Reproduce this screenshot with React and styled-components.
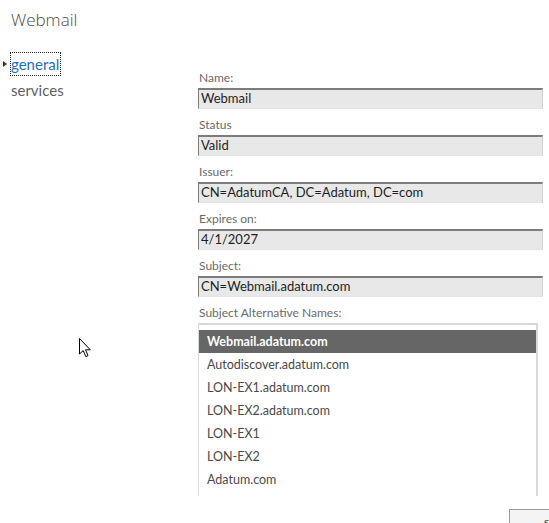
import React from 'react'
import styled, { createGlobalStyle } from 'styled-components'

const GlobalStyle = createGlobalStyle`
  html, body {
    margin: 0;
    padding: 0;
    background: #fff;
  }
  body {
    font-family: Lato, "Open Sans", "Liberation Sans", sans-serif;
  }
`

const Page = styled.div`
  position: relative;
  width: 549px;
  height: 523px;
  overflow: hidden;
  background: #fff;
  display: flex;
  flex-direction: column;
`

const Title = styled.h1`
  flex-shrink: 0;
  margin: 0;
  padding: 8px 0 0 11px;
  height: 53px;
  box-sizing: border-box;
  font-family: "Open Sans", sans-serif;
  font-size: 17px;
  font-weight: 300;
  color: #4a4a4a;
  line-height: 24px;
`

const Body = styled.div`
  display: flex;
  flex: 1;
  min-height: 0;
`

const Nav = styled.nav`
  width: 198px;
  display: flex;
  flex-direction: column;
  gap: 4px;
`

const NavItem = styled.div`
  position: relative;
  align-self: flex-start;
  margin-left: 11px;
  font-size: 15px;
  line-height: 22px;
  color: ${p => (p.$active ? '#1c6fc0' : '#5f5f5f')};
  outline: ${p => (p.$active ? '1px dotted #222' : 'none')};
  outline-offset: 0;
  padding-right: 1px;

  &::before {
    content: '';
    display: ${p => (p.$active ? 'block' : 'none')};
    position: absolute;
    left: -8px;
    top: 8px;
    border-left: 4px solid #333;
    border-top: 3.5px solid transparent;
    border-bottom: 3.5px solid transparent;
  }
`

const Form = styled.div`
  width: 345px;
  padding-top: 17px;
  display: flex;
  flex-direction: column;
  overflow: hidden;
`

const Field = styled.div`
  flex-shrink: 0;
  display: flex;
  flex-direction: column;
  margin-bottom: 8px;
`

const Label = styled.div`
  flex-shrink: 0;
  font-size: 12px;
  line-height: 16px;
  color: #6a6a6a;
  margin-bottom: 2px;
  padding-left: 1px;
`

const Input = styled.div`
  box-sizing: border-box;
  height: 21px;
  background: #e8e8e8;
  border-top: 2px solid #7c7c7c;
  border-left: 1px solid #7c7c7c;
  border-right: 1px solid #d2d2d2;
  border-bottom: 1px solid #e4e4e4;
  padding-left: 2px;
  font-size: 13px;
  line-height: 17px;
  color: #1e1e1e;
  white-space: nowrap;
`

const List = styled.div`
  flex-shrink: 0;
  box-sizing: border-box;
  width: 340px;
  height: 173px;
  overflow: hidden;
  border: 2px solid #d5dada;
  border-left-width: 1px;
  border-bottom: none;
  padding-top: 5px;
`

const ListItem = styled.div`
  height: 23px;
  line-height: 23px;
  padding-left: 8px;
  font-size: 12.5px;
  color: ${p => (p.$selected ? '#fff' : '#4a4a4a')};
  background: ${p => (p.$selected ? '#666666' : 'transparent')};
  font-weight: ${p => (p.$selected ? 700 : 400)};
`

const Footer = styled.div`
  flex-shrink: 0;
  box-sizing: border-box;
  height: 27px;
  display: flex;
  padding: 13px 0 0 509px;
`

const Button = styled.button`
  flex-shrink: 0;
  width: 90px;
  height: 24px;
  background: #f4f4f4;
  border: 1px solid #9a9a9a;
  padding: 0 0 0 34px;
  text-align: left;
  font-family: Lato, "Open Sans", sans-serif;
  font-size: 12px;
  color: #333;
`

const Cursor = styled.svg`
  position: absolute;
  left: 79px;
  top: 338px;
`

const fields = [
  ['Name:', 'Webmail'],
  ['Status', 'Valid'],
  ['Issuer:', 'CN=AdatumCA, DC=Adatum, DC=com'],
  ['Expires on:', '4/1/2027'],
  ['Subject:', 'CN=Webmail.adatum.com'],
]

const names = [
  'Webmail.adatum.com',
  'Autodiscover.adatum.com',
  'LON-EX1.adatum.com',
  'LON-EX2.adatum.com',
  'LON-EX1',
  'LON-EX2',
  'Adatum.com',
]

export default function App() {
  return (
    <Page>
      <GlobalStyle />
      <Title>Webmail</Title>
      <Body>
        <Nav>
          <NavItem $active>general</NavItem>
          <NavItem>services</NavItem>
        </Nav>
        <Form>
          {fields.map(([label, value]) => (
            <Field key={label}>
              <Label>{label}</Label>
              <Input>{value}</Input>
            </Field>
          ))}
          <Label>Subject Alternative Names:</Label>
          <List>
            {names.map((n, i) => (
              <ListItem key={n} $selected={i === 0}>{n}</ListItem>
            ))}
          </List>
        </Form>
      </Body>
      <Footer>
        <Button>save</Button>
      </Footer>
      <Cursor width="13" height="20" viewBox="0 0 13 20">
        <path d="M0.5 0.5 L0.5 16 L4.2 12.6 L6.8 18.6 L9 17.6 L6.5 11.8 L11.3 11.8 Z" fill="#fff" stroke="#000" strokeWidth="1" strokeLinejoin="miter" />
      </Cursor>
    </Page>
  )
}
